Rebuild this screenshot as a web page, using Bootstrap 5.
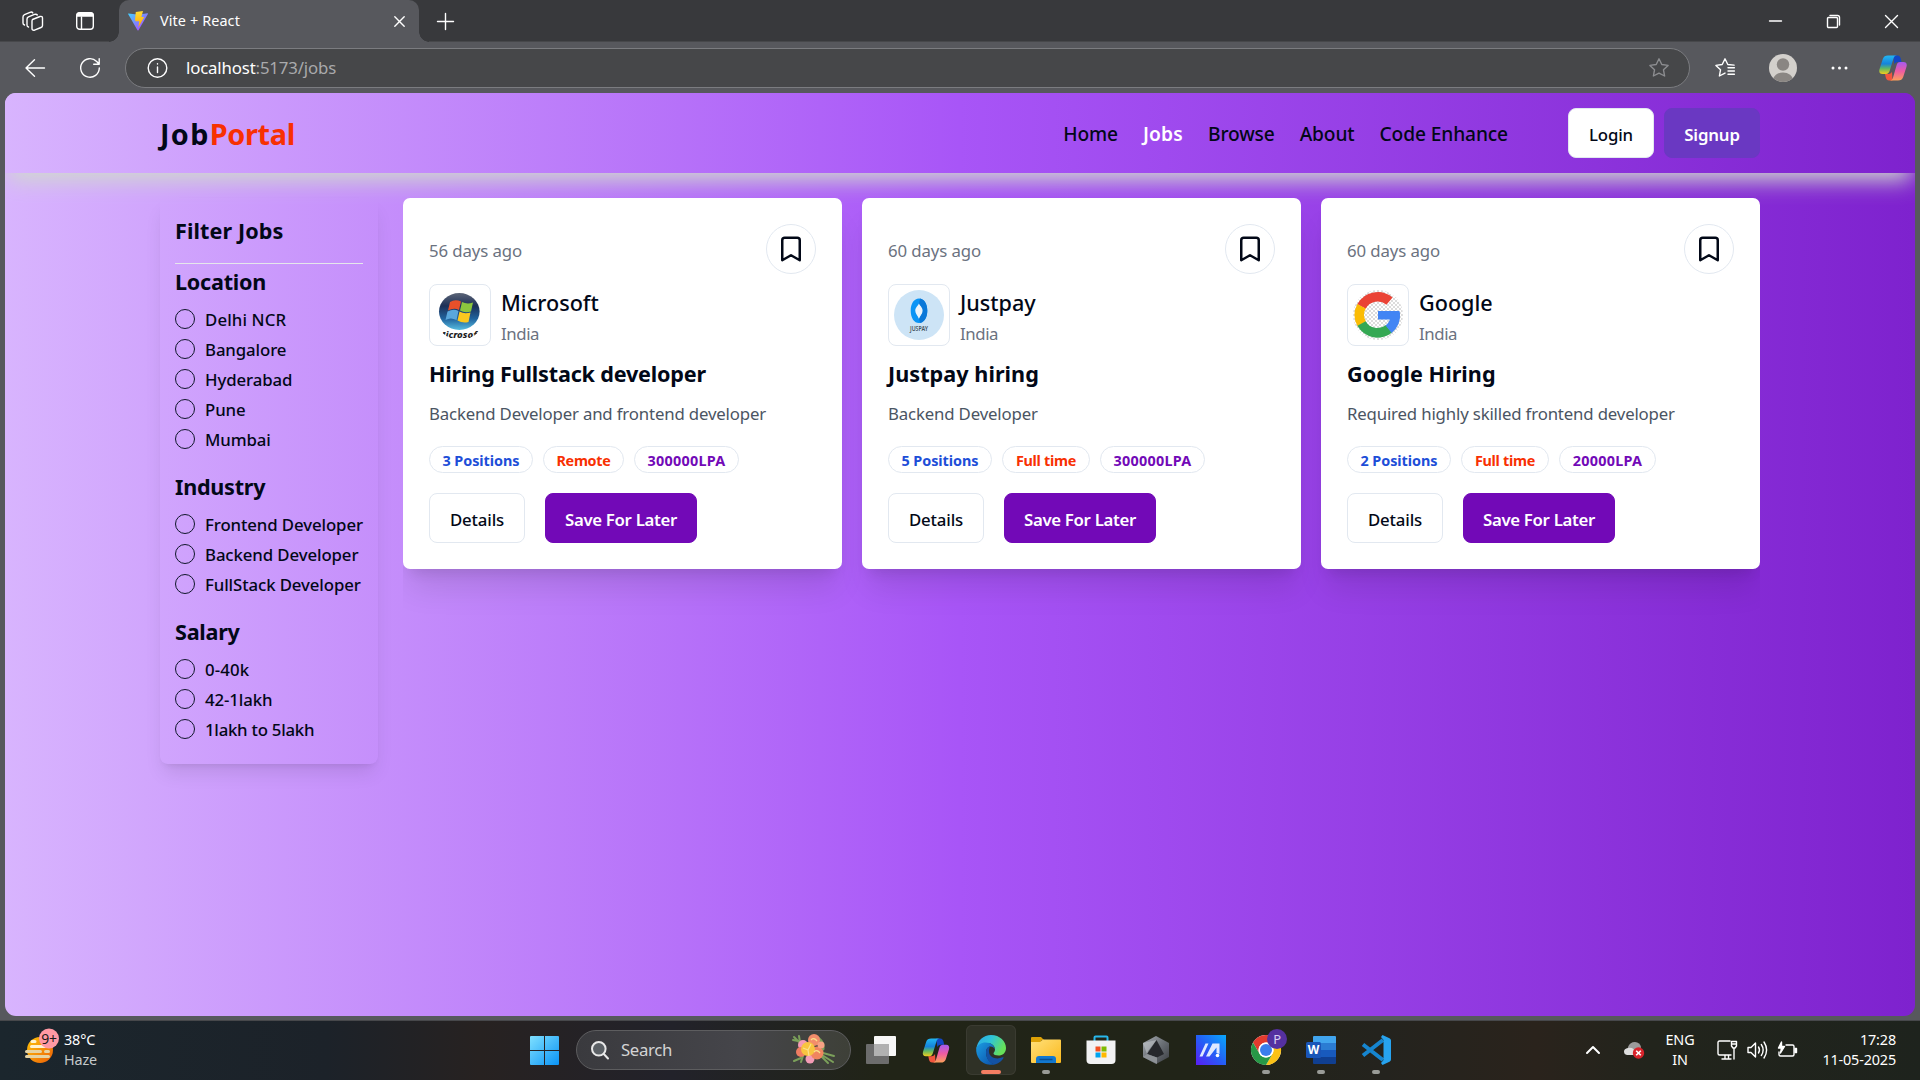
<!DOCTYPE html>
<html lang="en">
<head>
<meta charset="utf-8">
<meta name="viewport" content="width=device-width, initial-scale=1">
<title>Vite + React</title>
<link href="https://cdn.jsdelivr.net/npm/bootstrap@5.3.0/dist/css/bootstrap.min.css" rel="stylesheet">
<style>
  :root { --ink: #020817; --line: #e2e8f0; --violet: #7209b7; --chrome: #57585d; }
  body { font-family: "Noto Sans", "Open Sans", sans-serif; background: var(--chrome); color: var(--ink); font-size: 16.8px; line-height: 25px; overflow: hidden; }
  svg { display: block; flex: none; overflow: visible; }
  .ln { fill: none; stroke: #fff; stroke-width: 1.4; stroke-linecap: round; stroke-linejoin: round; }

  /* browser window */
  .tabstrip { height: 42px; background: #38393c; color: #fff; box-shadow: inset 0 -1px #47484b; }
  .strip-left { width: 119px; padding-left: 22px; gap: 33px; }
  .tab-live { width: 300px; height: 42px; background: var(--chrome); border-radius: 10px 10px 0 0; padding: 0 14px 0 9px; font-size: 14.4px; letter-spacing: .11px; position: relative; }
  .tab-live span { padding-bottom: 1px; }
  .tab-live::before, .tab-live::after { content: ""; position: absolute; bottom: 0; width: 10px; height: 10px; }
  .tab-live::before { left: -10px; background: radial-gradient(circle at 0 0, #38393c 9.5px, var(--chrome) 10px); }
  .tab-live::after { right: -10px; background: radial-gradient(circle at 100% 0, #38393c 9.5px, var(--chrome) 10px); }
  .win-btns { gap: 45px; padding-right: 22px; }
  .toolbar { height: 51px; padding: 0 13px 0 25px; }
  .tools { width: 192px; }
  .address { width: 1565px; height: 40px; border: 1px solid #7b7c80; border-radius: 20px; background: #464749; color: #fff; padding: 0 20px 0 21px; margin-left: 25px; letter-spacing: -.15px; }
  .address .url { margin-left: 19px; padding-bottom: 1px; }
  .address .dim { color: #a9aaac; }

  /* page */
  .page { height: 923px; margin: 0 5px; border-radius: 11px; background: linear-gradient(to right, #d8b4fe, #a855f7, #7e22ce); overflow: hidden; }
  .wrap { width: 1600px; margin-left: 155px; }
  .topbar { height: 80px; background: linear-gradient(to right, #d8b4fe, #a855f7, #7e22ce); box-shadow: 0 11px 21px -4px #d0dace; }
  .logo-text { font-size: 28.8px; font-weight: 700; letter-spacing: 1.3px; line-height: 35px; }
  .logo-text span { color: #f83002; letter-spacing: -.3px; }
  .menu { gap: 25px; font-size: 19.2px; font-weight: 500; letter-spacing: -.13px; margin-right: 60px; }
  .menu a { color: var(--ink); text-decoration: none; }
  .menu a.on { color: #fff; font-weight: 600; letter-spacing: .2px; }
  .box-btn { height: 50px; padding: 3px 0 0; border: 1px solid var(--line); border-radius: 8px; background: #fff; color: var(--ink); font-size: 16.8px; font-weight: 500; letter-spacing: -.14px; line-height: 42px; }
  .w-login { width: 86px; margin-right: 10px; } .w-signup { width: 96px; background: #6a38c2; border-color: #6a38c2; color: #fff; font-weight: 600; }
  .w-details { width: 96px; } .w-save { width: 152px; background: var(--violet); border-color: var(--violet); color: #fff; font-weight: 600; letter-spacing: -.31px; }

  .filters { width: 218px; margin-top: 25px; padding: 15px; height: 566px; border-radius: 8px; box-shadow: 0 12px 19px -4px rgba(0,0,0,.1), 0 5px 7px -5px rgba(0,0,0,.1); }
  .filters h2 { font-size: 21.6px; font-weight: 700; line-height: 35px; margin: 0; letter-spacing: -.25px; }
  .filters h2.first { letter-spacing: .1px; }
  .filters hr { margin: 15px 0 0; border-top: 1px solid #e5e7eb; opacity: 1; }
  .choices { display: grid; gap: 10px; padding: 10px 0 20px; margin: 0; list-style: none; }
  .choices li { display: flex; align-items: center; gap: 10px; height: 20px; font-weight: 500; letter-spacing: -.1px; white-space: nowrap; }
  .choices li.wide { letter-spacing: .12px; }
  .choices li.tight { letter-spacing: -.25px; }
  .choices li::before { content: ""; flex: none; width: 20px; height: 20px; border: 1px solid #0f172a; border-radius: 50%; }

  .jobs { width: 1357px; margin-left: 25px; height: 830px; padding-top: 25px; overflow: hidden; display: grid; grid-template-columns: repeat(3, 439px); gap: 20px; align-items: start; }
  .job { height: 371px; padding: 26px; background: #fff; border-radius: 7px; box-shadow: 0 25px 31px -6px rgba(0,0,0,.1), 0 10px 12px -7px rgba(0,0,0,.1); }
  .age { color: #6b7280; padding-top: 2px; letter-spacing: -.1px; }
  .mark-btn { width: 50px; height: 50px; border: 1px solid var(--line); border-radius: 50%; }
  .firm { margin-top: 10px; gap: 10px; height: 62px; }
  .firm-logo { width: 62px; height: 62px; border: 1px solid var(--line); border-radius: 8px; }
  .firm h3 { font-size: 21.6px; font-weight: 500; line-height: 34px; padding-bottom: 1px; margin: 0; }
  .firm p { color: #6b7280; margin: 0; letter-spacing: -.4px; }
  .job h4 { font-size: 21.6px; font-weight: 700; line-height: 35px; margin: 10px 0; letter-spacing: -.19px; }
  .job h4.wide { letter-spacing: .05px; }
  .about { color: #4b5563; margin: 0 0 20px; letter-spacing: -.16px; white-space: nowrap; }
  .chips { gap: 10px; }
  .chip { height: 27px; border: 1px solid var(--line); border-radius: 14px; font-size: 14.4px; font-weight: 700; line-height: 27px; text-align: center; }
  .c-pos { width: 104px; color: #1d4ed8; letter-spacing: -.05px; }
  .c-type { color: #f83002; letter-spacing: -.3px; width: 88px; }
  .c-type.short { width: 81px; }
  .c-pay { color: var(--violet); letter-spacing: .25px; width: 105px; }
  .c-pay.short { width: 97px; }
  .job .acts { margin-top: 20px; gap: 20px; }

  /* taskbar */
  .taskbar { margin-top: 4px; height: 60px; border-top: 1px solid #47484b; padding-bottom: 1px; color: #fff; font-size: 14.4px; line-height: 20px; letter-spacing: -.15px; background: linear-gradient(to right, #1b262d 0, #1c2229 17%, #272221 25%, #22222a 35%, #212417 46%, #212418 62%, #24231e 72%, #2a231c 80%, #22241c 86%, #1e231d 100%); }
  .weather { width: 530px; padding-left: 25px; gap: 9px; }
  .weather svg { margin-bottom: 8px; }
  .stack { display: flex; flex-direction: column; padding-bottom: 1px; }
  .haze { color: #c5c9cb; }
  .find { width: 275px; height: 40px; margin: 0 15px 0 17px; padding: 0 13px 0 14px; border: 1px solid #5d5d5f; border-radius: 20px; background: linear-gradient(to right, #3a3a3e, #45454a 60%, #3e4038); color: #d3d3d4; font-size: 16.8px; letter-spacing: -.35px; }
  .tile { width: 50px; height: 50px; border-radius: 6px; position: relative; }
  .tile.on { background: #2f3126; box-shadow: inset 0 0 0 1px #3a3b31; }
  .tile.run::after { content: ""; position: absolute; left: 21px; bottom: 1px; width: 8px; height: 4px; border-radius: 2px; background: #999b97; }
  .tile.on::after { left: 15px; width: 20px; background: #f47e63; }
  .tray { padding-right: 24px; }
  .lang { width: 34px; margin: 0 20px 0 18px; text-align: center; }
  .clock { width: 99px; text-align: right; }
</style>
</head>
<body>
<svg width="0" height="0" class="position-absolute" aria-hidden="true">
  <defs>
    <linearGradient id="cpA" x1="0" y1="0" x2="0" y2="1"><stop offset="0" stop-color="#22b7f2"/><stop offset=".45" stop-color="#1583dc"/><stop offset=".7" stop-color="#5fb765"/><stop offset="1" stop-color="#f2cc1c"/></linearGradient>
    <linearGradient id="cpB" x1="0" y1="0" x2="0" y2="1"><stop offset="0" stop-color="#a55af0"/><stop offset=".5" stop-color="#ee5ba3"/><stop offset="1" stop-color="#fba05a"/></linearGradient>
    <linearGradient id="vt" x1="0" y1="0" x2="1" y2="1"><stop offset="0" stop-color="#41d1ff"/><stop offset="1" stop-color="#bd34fe"/></linearGradient>
    <linearGradient id="bolt" x1="0" y1="0" x2="0" y2="1"><stop offset="0" stop-color="#ffdd35"/><stop offset="1" stop-color="#ffa800"/></linearGradient>
    <linearGradient id="sun" x1="0" y1="0" x2="1" y2="1"><stop offset="0" stop-color="#ffc60a"/><stop offset="1" stop-color="#ec5d07"/></linearGradient>
    <linearGradient id="win" x1="0" y1="0" x2="1" y2="1"><stop offset="0" stop-color="#7fe0ff"/><stop offset="1" stop-color="#0a93f5"/></linearGradient>
    <linearGradient id="orb" x1="0" y1="0" x2="0" y2="1"><stop offset="0" stop-color="#5c6577"/><stop offset=".35" stop-color="#1c2f57"/><stop offset=".7" stop-color="#21649f"/><stop offset="1" stop-color="#58bde0"/></linearGradient>
    <linearGradient id="edA" x1="0" y1="0" x2="1" y2=".4"><stop offset="0" stop-color="#2ba5e8"/><stop offset=".5" stop-color="#2fc4d8"/><stop offset="1" stop-color="#66e05a"/></linearGradient>
    <linearGradient id="edB" x1="0" y1="0" x2="1" y2="1"><stop offset="0" stop-color="#1b9de2"/><stop offset="1" stop-color="#0b4da8"/></linearGradient>
    <linearGradient id="fold" x1="0" y1="0" x2="1" y2="1"><stop offset="0" stop-color="#ffe07a"/><stop offset="1" stop-color="#fbb91d"/></linearGradient>
    <linearGradient id="asus" x1="0" y1="1" x2="1" y2="0"><stop offset="0" stop-color="#5a1cf5"/><stop offset=".5" stop-color="#245ff6"/><stop offset="1" stop-color="#08a8fb"/></linearGradient>
    <linearGradient id="hexg" x1="0" y1="0" x2="1" y2="1"><stop offset="0" stop-color="#a8adb3"/><stop offset=".5" stop-color="#6b7076"/><stop offset="1" stop-color="#3a3d42"/></linearGradient>
    <pattern id="chk" width="4" height="4" patternUnits="userSpaceOnUse"><path fill="#fff" d="M0 0h4v4H0z"/><path fill="#dcdcdc" d="M0 0h2v2H0zM2 2h2v2H2z"/></pattern>
    <clipPath id="disc"><circle cx="25" cy="25" r="25"/></clipPath>
    <symbol id="copilot" viewBox="0 0 28 26">
      <path fill="#1246c4" d="M14 .5h4.500c2 0 2.800 1.500 3.300 3.200L22.500 7H19c-2 0-3 1-3.500 2.500z"/>
      <path fill="#f2563e" d="M13.500 25.500H10c-2 0-2.800-1.500-3.300-3.200L6 19h3.500c2 0 3-1 3.500-2.500z"/>
      <path fill="url(#cpA)" d="M9 .5h9c-2 0-3 1.200-3.600 3.300l-3.700 12c-.6 2-1.700 3.200-3.700 3.200H3.500C.8 19-.3 17 .5 14.300L3.800 4C4.600 1.500 6.300.5 9 .5z"/>
      <path fill="url(#cpB)" d="M19 25.500h-8.500c2 0 3-1.200 3.600-3.300l3.500-12c.6-2 1.700-3.200 3.700-3.200h3.200c2.700 0 3.800 2 3 4.700L24.200 22c-.8 2.500-2.500 3.500-5.200 3.500z"/>
    </symbol>
    <symbol id="bookmark" viewBox="0 0 24 24"><path d="m19 21-7-4-7 4V5a2 2 0 0 1 2-2h10a2 2 0 0 1 2 2v16z" fill="none" stroke="#020817" stroke-width="2" stroke-linejoin="round" stroke-linecap="round"/></symbol>
  </defs>
</svg>

<header>
  <div class="tabstrip d-flex align-items-center">
    <div class="strip-left d-flex align-items-center">
      <svg class="ln" width="21" height="20" viewBox="0 0 21 20"><path d="M10.500 8.500l7.500-3q2.500-.5 2.500 1.500v7.500q0 1.500-1.500 2l-6.500 2.700q-2.500.5-2.500-1.700v-7q0-1.500.5-2zM6.500 16q-1.500-.3-1.500-2V8.200q0-1.700 1.500-2.300l6-2.500q2-.6 2.800.6M2.500 14Q1 13.500 1 12V6q0-1.600 1.500-2.300l5.500-2.400q2-.7 2.800.6"/></svg>
      <svg class="ln" width="18" height="18" viewBox="0 0 18 18"><rect x=".7" y=".7" width="16.600" height="16.600" rx="3"/><path fill="#fff" d="M1 4V3q0-2 2-2h12q2 0 2 2v1z"/><path d="M5.500 5v12"/></svg>
    </div>
    <div class="tab-live d-flex align-items-center">
      <svg width="20" height="20" viewBox="0 0 20 20"><path fill="url(#vt)" d="M.4 2.500 7 3.200l6 0 6.600-.9q.5.100.3.600L10.500 19.300q-.5.600-1 0L.1 3q-.100-.5.300-.5z"/><path fill="url(#bolt)" d="M7.800.9 15 0 13.400 6h2.800L10.300 16.500l1-6.300H7.600L7 9z"/></svg>
      <span class="ms-2 ps-1 flex-grow-1">Vite + React</span>
      <svg class="ln" width="11" height="11" viewBox="0 0 11 11"><path d="M.8.8l9.400 9.400M10.200.8.8 10.200"/></svg>
    </div>
    <svg class="ln ms-3" width="17" height="17" viewBox="0 0 17 17" transform="translate(2)"><path d="M8.500.5v16M.5 8.500h16"/></svg>
    <div class="win-btns d-flex align-items-center ms-auto">
      <svg class="ln" width="13" height="13"><path d="M.5 6h12"/></svg>
      <svg class="ln" width="13" height="13"><rect x=".5" y="2.500" width="10" height="10" rx="1"/><path d="M3 .5h7.500q2 0 2 2V10"/></svg>
      <svg class="ln" width="13" height="13"><path d="M.5.5l12 12M12.500.5l-12 12"/></svg>
    </div>
  </div>
  <div class="toolbar d-flex align-items-center">
    <svg class="ln" width="20" height="18"><path d="M19.500 9H1M9.500.8 1 9l8.500 8.200"/></svg>
    <svg class="ln ms-4" width="31" height="20" viewBox="-11 0 31 20"><path d="M19.300 10A9.300 9.300 0 1 1 16.700 3.500L19 6M19.200.8V6.200H13.700"/></svg>
    <div class="address d-flex align-items-center">
      <svg class="ln" width="20" height="20"><circle cx="10.500" cy="10" r="9.300"/><path d="M10.500 9v5.500M10.500 5.800v.2"/></svg>
      <span class="url flex-grow-1">localhost<span class="dim">:5173/jobs</span></span>
      <svg class="ln" width="20" height="19" viewBox="0 0 20 19" style="stroke:#8c8d90"><path d="M10 .8l2.800 5.700 6.300.9-4.600 4.400 1.100 6.200L10 15.100 4.400 18l1.100-6.200L.9 7.400l6.300-.9z"/></svg>
    </div>
    <div class="tools d-flex align-items-center justify-content-between ms-auto">
      <svg class="ln" width="20" height="19" viewBox="0 0 20 19"><path d="M10 15.100 4.400 18l1.100-6.200L.9 7.400l6.300-.9L10 .8l2.800 5.700 6.300.6M13 9.700h6.400M13 13h6.400M13 16.300h6.400"/></svg>
      <svg width="28" height="28" viewBox="-1 0 28 28"><clipPath id="av"><circle cx="14" cy="14" r="14"/></clipPath><g clip-path="url(#av)"><path fill="#d3d0cc" d="M0 0h28v28H0z"/><circle cx="14" cy="10.500" r="6.200" fill="#8a8683"/><ellipse cx="14" cy="26" rx="10" ry="7.500" fill="#8a8683"/></g></svg>
      <svg width="17" height="4" viewBox="-2 0 17 4" fill="#fff"><circle cx="2" cy="2" r="1.500"/><circle cx="8.500" cy="2" r="1.500"/><circle cx="15" cy="2" r="1.500"/></svg>
      <svg width="28" height="26"><use href="#copilot"/></svg>
    </div>
  </div>
</header>

<div class="page">
  <nav class="topbar">
    <div class="wrap d-flex align-items-center h-100">
      <div class="logo-text me-auto">Job<span>Portal</span></div>
      <div class="menu d-flex">
        <a href="#">Home</a><a href="#" class="on">Jobs</a><a href="#">Browse</a><a href="#">About</a><a href="#">Code Enhance</a>
      </div>
      <button class="btn box-btn w-login" type="button">Login</button>
      <button class="btn box-btn w-signup" type="button">Signup</button>
    </div>
  </nav>

  <div class="wrap d-flex align-items-start">
    <aside class="filters">
      <h2 class="first">Filter Jobs</h2>
      <hr>
      <h2>Location</h2>
      <ul class="choices"><li class="wide">Delhi NCR</li><li>Bangalore</li><li>Hyderabad</li><li>Pune</li><li>Mumbai</li></ul>
      <h2>Industry</h2>
      <ul class="choices"><li>Frontend Developer</li><li>Backend Developer</li><li>FullStack Developer</li></ul>
      <h2>Salary</h2>
      <ul class="choices"><li class="wide">0-40k</li><li>42-1lakh</li><li class="tight">1lakh to 5lakh</li></ul>
    </aside>

    <main class="jobs">
      <article class="job">
        <div class="d-flex align-items-center justify-content-between">
          <span class="age">56 days ago</span>
          <span class="mark-btn d-flex align-items-center justify-content-center"><svg width="30" height="30"><use href="#bookmark"/></svg></span>
        </div>
        <div class="firm d-flex align-items-end">
          <div class="firm-logo d-flex align-items-center justify-content-center">
            <svg width="50" height="50"><g clip-path="url(#disc)"><ellipse cx="24.300" cy="21.500" rx="20.300" ry="18.500" fill="url(#orb)"/>
              <path fill="#e8502a" d="M15 12q5-3 11-.5l-2 8.500q-5-2.500-11 .5z"/><path fill="#8cc63e" d="M27 12q5 2.500 11 .5l-2 9q-6 2-11-1z"/><path fill="#5aa7dc" d="M12.500 21.500q6-3 11-.5l-2 9q-6-3-11 0z"/><path fill="#fbc820" d="M24.500 21.500q5 3 11 1l-2 9.500q-6 1.500-11-1.500z"/>
              <text x="2" y="48" font-size="8.500" font-weight="800" font-style="italic" textLength="44" lengthAdjust="spacingAndGlyphs" fill="#222">Microsoft</text></g></svg>
          </div>
          <div><h3>Microsoft</h3><p>India</p></div>
        </div>
        <h4>Hiring Fullstack developer</h4>
        <p class="about">Backend Developer and frontend developer</p>
        <div class="chips d-flex"><span class="chip c-pos">3 Positions</span><span class="chip c-type short">Remote</span><span class="chip c-pay">300000LPA</span></div>
        <div class="acts d-flex"><button class="btn box-btn w-details" type="button">Details</button><button class="btn box-btn w-save" type="button">Save For Later</button></div>
      </article>

      <article class="job">
        <div class="d-flex align-items-center justify-content-between">
          <span class="age">60 days ago</span>
          <span class="mark-btn d-flex align-items-center justify-content-center"><svg width="30" height="30"><use href="#bookmark"/></svg></span>
        </div>
        <div class="firm d-flex align-items-end">
          <div class="firm-logo d-flex align-items-center justify-content-center">
            <svg width="50" height="50"><circle cx="25" cy="25" r="25" fill="#cde4f6"/><path fill="#0a94f5" fill-rule="evenodd" d="M25 8.500c4.800 0 8.300 5 8.300 12.200S29.800 33 25 33s-8.300-5-8.300-12.300S20.200 8.500 25 8.500zm0 5c-1 2.500-3.600 4-3.600 7.200s2.600 5 3.600 8c1-3 3.600-4.800 3.600-8s-2.600-4.700-3.600-7.200z"/><path fill="#0b78d8" d="M26 8.600c4.300.6 7.300 5.400 7.300 12.100 0 6.500-2.800 11.300-7.300 12.200l-1-4.200c1-3 3.600-4.800 3.600-8s-2.600-4.700-3.600-7.200z"/><path fill="#fff" d="M25 13.500c-1 2.500-3.600 4-3.600 7.200s2.600 5 3.600 8c1-3 3.600-4.800 3.600-8s-2.600-4.700-3.600-7.200z" opacity=".6"/>
              <text x="16" y="41" font-size="7" font-weight="600" textLength="18" lengthAdjust="spacingAndGlyphs" fill="#41505c">JUSPAY</text></svg>
          </div>
          <div><h3>Justpay</h3><p>India</p></div>
        </div>
        <h4 class="wide">Justpay hiring</h4>
        <p class="about">Backend Developer</p>
        <div class="chips d-flex"><span class="chip c-pos">5 Positions</span><span class="chip c-type">Full time</span><span class="chip c-pay">300000LPA</span></div>
        <div class="acts d-flex"><button class="btn box-btn w-details" type="button">Details</button><button class="btn box-btn w-save" type="button">Save For Later</button></div>
      </article>

      <article class="job">
        <div class="d-flex align-items-center justify-content-between">
          <span class="age">60 days ago</span>
          <span class="mark-btn d-flex align-items-center justify-content-center"><svg width="30" height="30"><use href="#bookmark"/></svg></span>
        </div>
        <div class="firm d-flex align-items-end">
          <div class="firm-logo d-flex align-items-center justify-content-center">
            <svg width="50" height="50"><circle cx="25" cy="25" r="25" fill="url(#chk)"/>
              <g fill="none" stroke-width="9.500"><path stroke="#ea4335" d="M8.500 16.500A18.300 18.300 0 0 1 36.500 11.200"/><path stroke="#fbbc05" d="M8.800 34A18.300 18.300 0 0 1 8.500 16.200"/><path stroke="#34a853" d="M36 38.800A18.300 18.300 0 0 1 8.600 33.500"/><path stroke="#4285f4" d="M42.200 23A18.300 18.300 0 0 1 35.600 39.200"/></g><path fill="#4285f4" d="M25 21h21.500q.6 4-.2 8.500H25z"/></svg>
          </div>
          <div><h3>Google</h3><p>India</p></div>
        </div>
        <h4 class="wide">Google Hiring</h4>
        <p class="about">Required highly skilled frontend developer</p>
        <div class="chips d-flex"><span class="chip c-pos">2 Positions</span><span class="chip c-type">Full time</span><span class="chip c-pay short">20000LPA</span></div>
        <div class="acts d-flex"><button class="btn box-btn w-details" type="button">Details</button><button class="btn box-btn w-save" type="button">Save For Later</button></div>
      </article>
    </main>
  </div>
</div>

<footer class="taskbar d-flex align-items-center">
  <div class="weather d-flex align-items-center">
    <svg width="30" height="38" viewBox="0 0 30 38"><circle cx="15" cy="23" r="13" fill="url(#sun)"/><g stroke-width="3" stroke-linecap="round"><path stroke="#fff3d0" d="M7 14.500h3M6.500 19.500H26"/><path stroke="#e6d3a3" d="M1.500 24.500h14M20.500 24.500h3M1.500 29.500h22"/></g><circle cx="24" cy="11.500" r="10" fill="#ff99a4"/><text x="24" y="16.500" font-size="14" text-anchor="middle" fill="#1a1a1a">9+</text></svg>
    <div class="stack"><span>38°C</span><span class="haze">Haze</span></div>
  </div>
  <svg width="29" height="29" fill="url(#win)"><path d="M1 0h13v14H0V1q0-1 1-1zM15 0h13q1 0 1 1v13H15zM0 15h14v14H1q-1 0-1-1zM15 15h14v13q0 1-1 1H15z"/></svg>
  <div class="find d-flex align-items-center">
    <svg width="18" height="19" fill="none" stroke="#e8e8e8" stroke-width="2" stroke-linecap="round"><circle cx="7.800" cy="7.800" r="6.800" fill="#5b6065"/><path d="M12.800 13l4.200 4.500"/></svg>
    <span class="flex-grow-1 ms-2 ps-1">Search</span>
    <svg width="46" height="32" viewBox="0 0 46 32"><g stroke="#7ba05a" stroke-width="2" fill="none" stroke-linecap="round"><path d="M32 19l11 3M31 21l11 7M30 22l7 7M12 12 3 3M2 6l5 1M8 2l1 6M10 24l-7 3M10 28l2-6"/><path d="M27 4q6 5 5 11" stroke-width="3"/></g><circle cx="12" cy="11" r="5" fill="#f49bb5"/><circle cx="19" cy="25" r="4.500" fill="#f49bb5"/><circle cx="10" cy="18" r="5" fill="#ef7d62"/><circle cx="23" cy="6" r="6" fill="#f38d6b"/><circle cx="26" cy="19" r="6.500" fill="#f0855f"/><circle cx="30" cy="11" r="3.500" fill="#f6a184"/><circle cx="17" cy="15" r="7" fill="#f8c440"/><path d="M12 14l5 2 3-6M17 16l1 6M20 6q3-3 6 1M23 18q3-3 6 1" stroke="#fbe08a" stroke-width="1.300" fill="none"/></svg>
  </div>
  <svg width="30" height="28"><rect x="0" y="8" width="23" height="20" rx="1" fill="#6c6c6c"/><rect x="8" y="0" width="22" height="20" rx="1" fill="#f7f7f7"/><path fill="#b1b1b1" d="M8 8h15v12H8z"/></svg>
  <svg class="me-3" width="54" height="25"><use href="#copilot" x="26" width="28" height="25"/></svg>
  <div class="d-flex" style="gap:5px">
    <div class="tile run on d-flex align-items-center justify-content-center"><svg width="30" height="30" viewBox="0 0 30 30"><path fill="url(#edA)" d="M.3 14C1.300 5.500 7.500 0 15 0c9 0 15 6.500 15 13 0 5-3.500 7.500-7.500 7.500-3 0-5-1-5-2 0-1 1.500-1.500 1.500-4C19 11 16 8 11.500 8 6 8 1.500 11 .3 14z"/><path fill="url(#edB)" d="M.2 13.500C1.500 10 5 7.500 9.500 7.500c6 0 9 3.500 9.500 7-.8-2-2.500-3-4.500-3-2.500 0-4.500 2.500-4.500 6C10 24 15 29 19.500 29.200 17.500 30 8.500 31 3.500 24.500.8 21 0 17 .2 13.500z"/><path fill="#1352a5" d="M14 11.500c-3 .5-4 3.200-4 6C10 24 14 29 19.500 29.200c3.500-1 6.500-3.500 8-6.200.3-.7-.3-1-1-.7-6 2.700-13 .2-13.500-5.300-.2-2.500.5-4.500 1-5.500z"/></svg></div>
    <div class="tile run d-flex align-items-center justify-content-center"><svg width="30" height="28" viewBox="0 0 30 28"><path fill="#dda106" d="M0 2q0-1 1-1h9l3 3h-2l-2 3H0z"/><path fill="url(#fold)" d="M0 6h9l3-2.500h17q1 0 1 1V26q0 1-1 1H1q-1 0-1-1z"/><path fill="#1278cf" d="M5 27v-4q0-3 3-3h14q3 0 3 3v4z"/><path stroke="#0a4e91" stroke-width="1.500" d="M8.500 23.500h13"/></svg></div>
    <div class="tile d-flex align-items-center justify-content-center"><svg width="30" height="30" viewBox="0 0 30 30"><path fill="none" stroke="#28b8ec" stroke-width="2" d="M8.500 7V2.500q0-1 1-1h11q1 0 1 1V7"/><path fill="#f2f2f3" d="M.5 5.500h29V25q0 4-4 4h-21q-4 0-4-4z"/><path fill="#f25022" d="M9.500 11.500h5v5h-5z"/><path fill="#7fba00" d="M15.500 11.500h5v5h-5z"/><path fill="#00a4ef" d="M9.500 17.500h5v5h-5z"/><path fill="#ffb900" d="M15.500 17.500h5v5h-5z"/></svg></div>
    <div class="tile d-flex align-items-center justify-content-center"><svg width="26" height="28" viewBox="0 0 26 28"><path fill="url(#hexg)" d="M13 0l13 7v14l-13 7L0 21V7z"/><path fill="#26282c" d="M13.500 4 21 18l-7 3.500L4 18z"/><path fill="#c9cdd1" d="M13.500 4 5 15l-1 3L0 7z" opacity=".5"/><path fill="#8d9196" d="M4 18l10 3.500V28L0 21z"/></svg></div>
    <div class="tile d-flex align-items-center justify-content-center"><svg width="30" height="30" viewBox="0 0 30 30"><path fill="url(#asus)" d="M0 0h30v30H0z"/><path fill="#dfe8ff" d="M3.500 21.500 9.500 8.500h3l-6 13zM10 21.500l6.500-13h7v10.500l-3-1v-5.500l-7 9z"/><circle cx="21.500" cy="20.500" r="1.800" fill="#fff"/></svg></div>
    <div class="tile run d-flex align-items-center justify-content-center"><svg width="30" height="30" viewBox="0 0 30 30"><circle cx="15" cy="15" r="15" fill="#fff"/><path fill="#e33b2e" d="M2 7.500A15 15 0 0 1 28 7.500H15A7.500 7.500 0 0 0 8.500 18.700z"/><path fill="#fbc116" d="M28 7.500A15 15 0 0 1 15 30l6.500-11.200A7.500 7.500 0 0 0 15 7.500z"/><path fill="#279847" d="M2 7.500 8.500 18.800A7.500 7.500 0 0 0 21.500 18.800L15 30A15 15 0 0 1 2 7.500z"/><circle cx="15" cy="15" r="7.500" fill="#fff"/><circle cx="15" cy="15" r="6" fill="#3b7ded"/><circle cx="26" cy="4" r="10" fill="#5530a0"/><text x="26" y="9" font-size="13" text-anchor="middle" fill="#d9cdf2">P</text></svg></div>
    <div class="tile run d-flex align-items-center justify-content-center"><svg width="30" height="28" viewBox="0 0 30 28"><path fill="#41a5ee" d="M8 0h21q1 0 1 1v6H7V1q0-1 1-1z"/><path fill="#2b7cd3" d="M7 7h23v7H7z"/><path fill="#185abd" d="M7 14h23v7H7z"/><path fill="#103f91" d="M7 21h23v6q0 1-1 1H8q-1 0-1-1z"/><rect y="6" width="15" height="16" rx="1.500" fill="#1a56b8"/><text x="7.500" y="18.300" font-size="12" font-weight="700" text-anchor="middle" fill="#fff">W</text></svg></div>
    <div class="tile run d-flex align-items-center justify-content-center"><svg width="30" height="30" viewBox="0 0 30 30"><path fill="none" stroke="#1685cf" stroke-width="4" stroke-linejoin="round" d="M2 9.500 22 25M2 20.500 22 5"/><path fill="#27a3ef" d="M21.500 0 28.500 3.200q1.500.8 1.500 2.300v19q0 1.500-1.500 2.300L21.500 30l-1.500-2 2.500-3V5L20 2z"/></svg></div>
  </div>
  <div class="tray d-flex align-items-center ms-auto">
    <svg class="ln" width="14" height="8" style="stroke-width:2"><path d="M1 7l6-6 6 6"/></svg>
    <svg class="ms-4" width="21" height="17"><path fill="#9b9b9b" d="M4 5Q6 0 11 0q5 .5 6 5l-1 5H3z"/><path fill="#dedede" d="M3 13q-3-.5-3-3.500T4 6q3-1 5.500 1L12 13z"/><circle cx="14.500" cy="11" r="5.700" fill="#d8232b"/><path stroke="#fff" stroke-width="1.600" d="M12.200 8.700l4.600 4.600M16.800 8.700l-4.600 4.600"/></svg>
    <div class="stack lang"><span>ENG</span><span>IN</span></div>
    <div class="d-flex align-items-center" style="gap:10px">
      <svg class="ln" width="20" height="20"><path d="M13 1H2.500Q1 1 1 2.500v11Q1 15 2.500 15H14M5 19h9M8 15v4M11.500 15v4M14.500 1.500h5V6l-1.500 2h-2L14.500 6zM17 8v11M14.500 4h5"/></svg>
      <svg class="ln" width="20" height="18"><path d="M1 6.500h3l4.500-4.500v14L4 11.500H1zM11.500 6q2 3 0 6M14.300 3.500q3.700 5.500 0 11M17 1q5.200 8 0 16"/></svg>
      <svg class="ln" width="20" height="18"><path d="M9 4h6.500Q17 4 17 5.500v8Q17 15 15.500 15h-12Q2 15 2 13.500V11"/><path fill="#fff" d="M18 7.500h1.500v4H18zM4.500 1 1.500 7h3L3.500 12l4-6.500h-3z"/></svg>
    </div>
    <div class="stack clock"><span>17:28</span><span>11-05-2025</span></div>
  </div>
</footer>
<script src="https://cdn.jsdelivr.net/npm/bootstrap@5.3.0/dist/js/bootstrap.bundle.min.js"></script>
</body>
</html>
